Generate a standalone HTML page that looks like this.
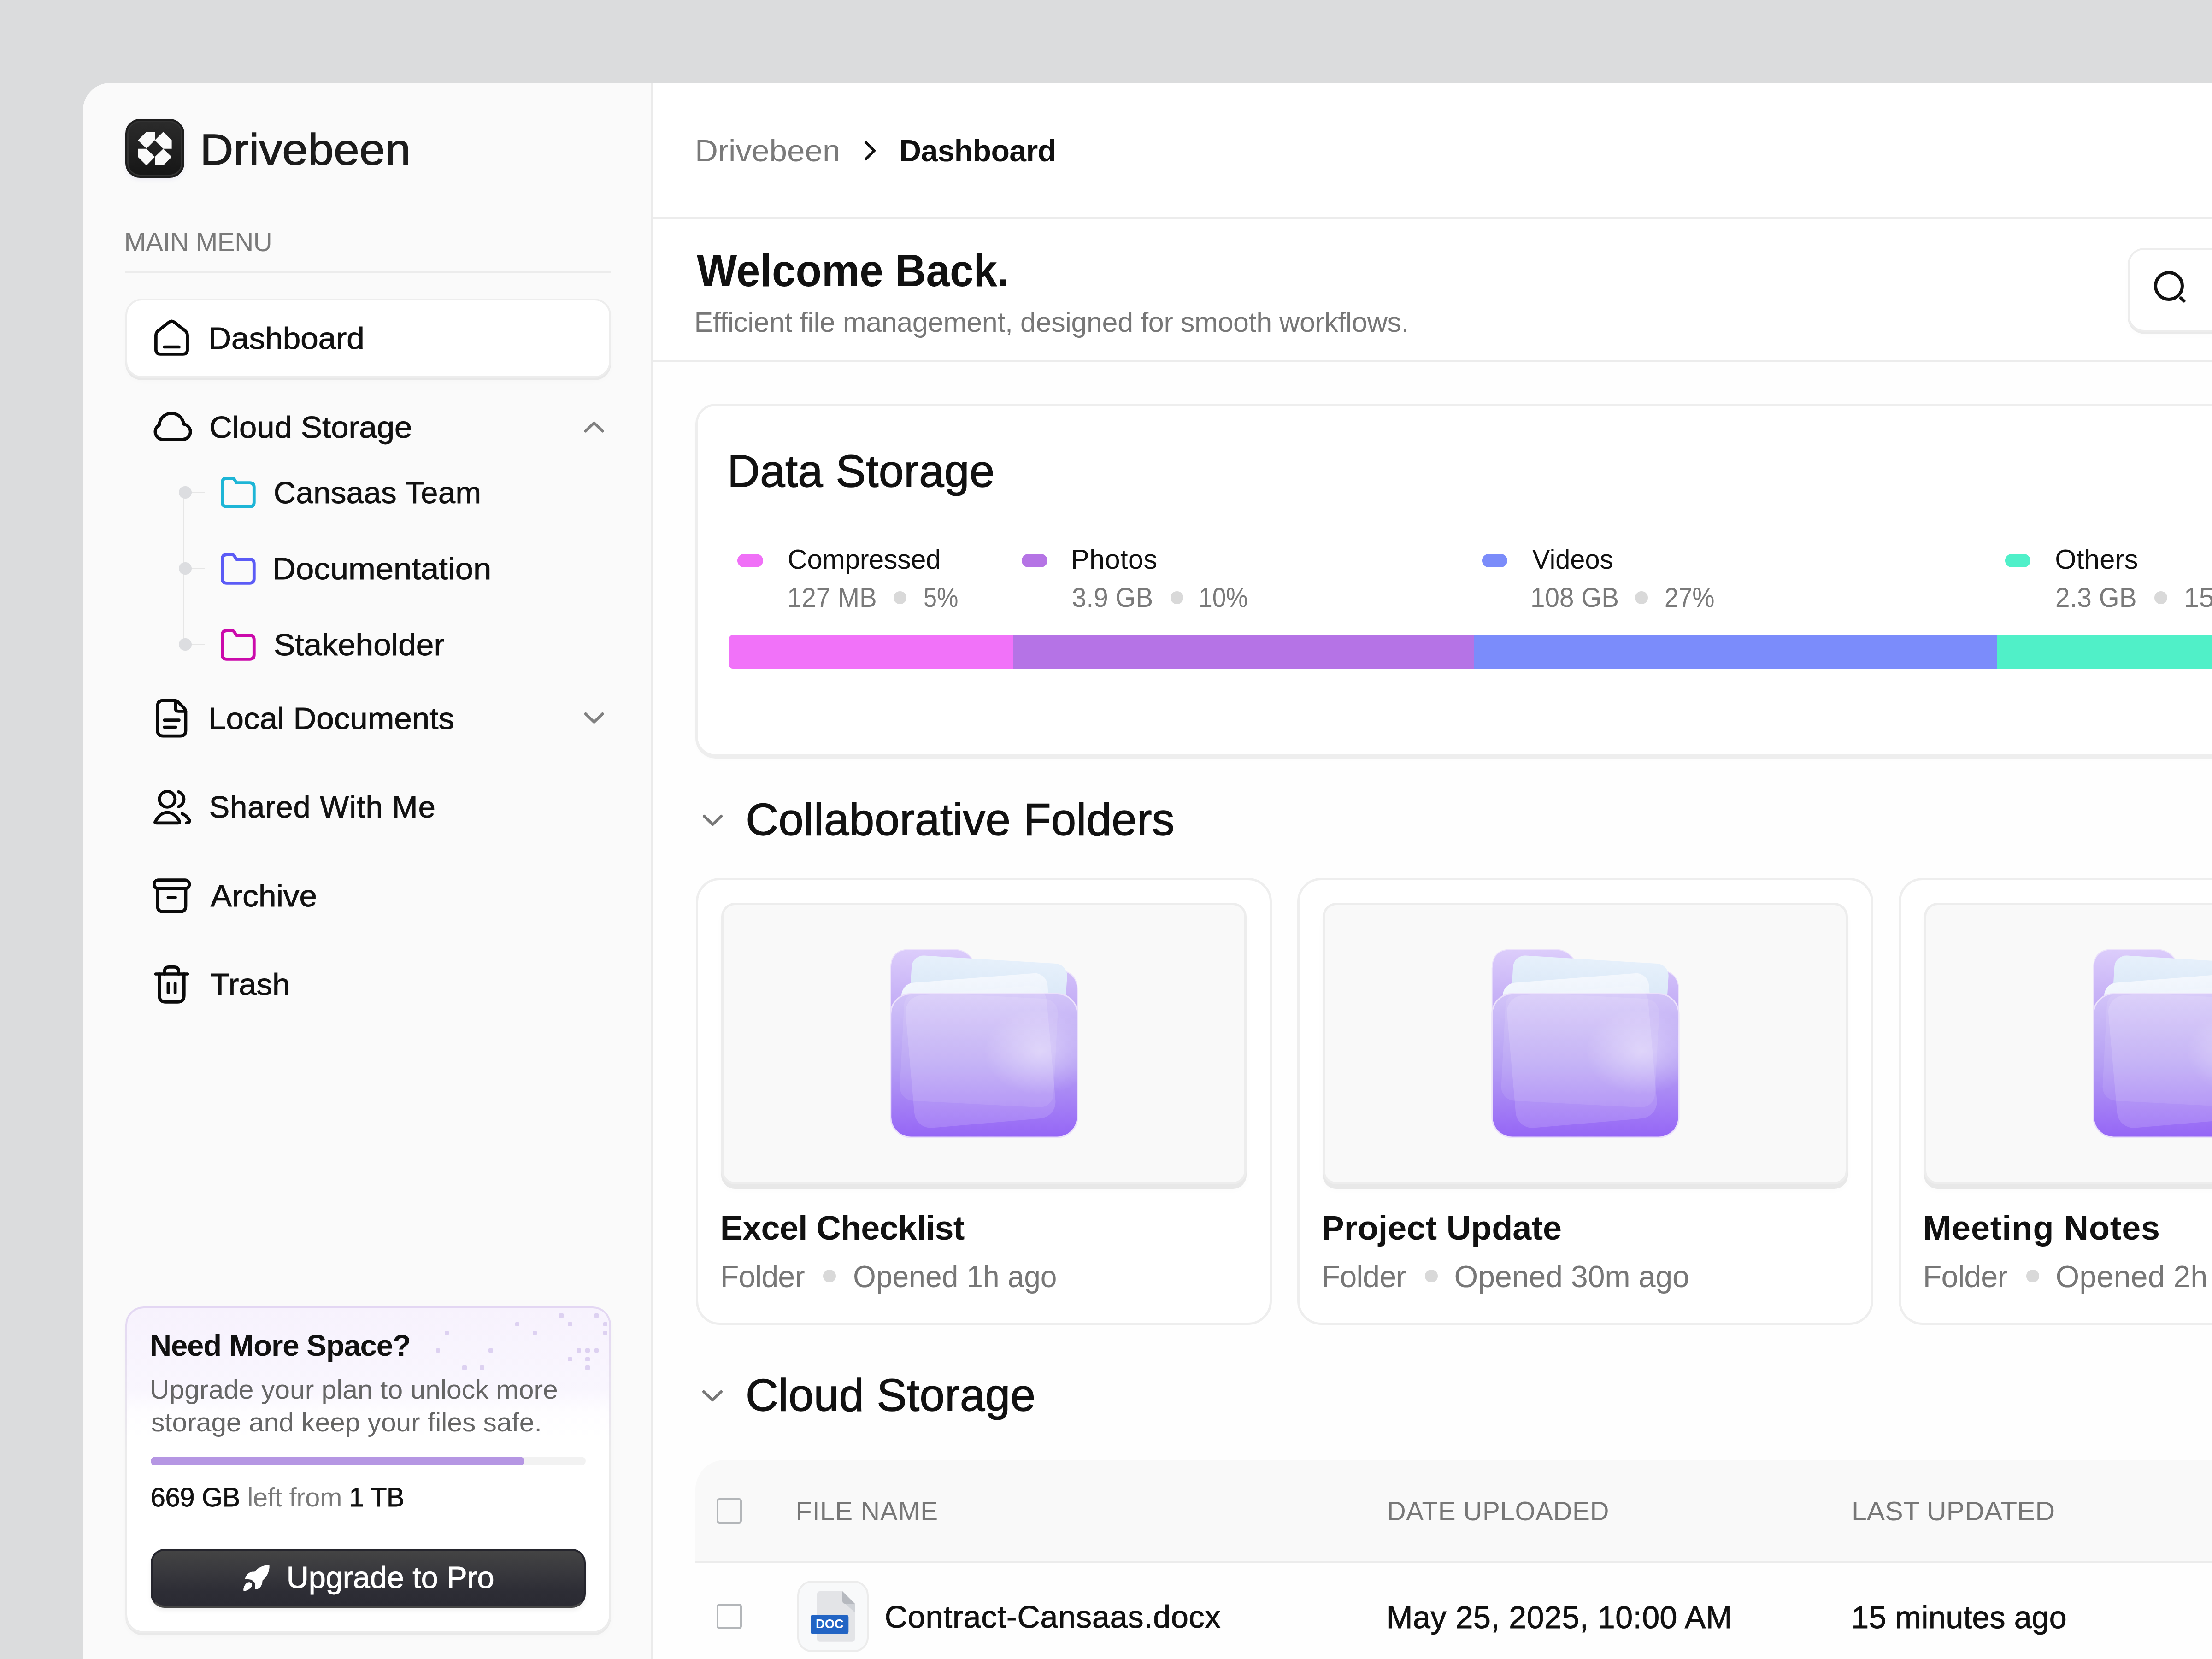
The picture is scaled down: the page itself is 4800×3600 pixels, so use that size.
<!DOCTYPE html>
<html><head><meta charset="utf-8"><title>Drivebeen Dashboard</title>
<style>
html,body{margin:0;padding:0;width:4800px;height:3600px;overflow:hidden;background:#dbdcdd}
body{position:relative;font-family:"Liberation Sans",sans-serif}
.t{position:absolute;white-space:nowrap;line-height:1}
svg{overflow:visible}
</style></head><body>
<div style="position:absolute;left:180px;top:180px;width:4620px;height:3420px;background:#ffffff;border-top-left-radius:60px"></div>
<div style="position:absolute;left:180px;top:180px;width:1233px;height:3420px;background:#fafafa;border-top-left-radius:60px;border-right:4px solid #ebebeb"></div>
<div style="position:absolute;left:1417px;top:786px;width:3383px;height:2814px;background:#fefefe"></div>
<div style="position:absolute;left:1417px;top:471px;width:3383px;height:4px;background:#ececec"></div>
<div style="position:absolute;left:1417px;top:782px;width:3383px;height:4px;background:#ececec"></div>
<div style="position:absolute;left:272px;top:258px;width:128px;height:128px;box-sizing:border-box;border-radius:32px;background:linear-gradient(#2b2b2b,#161616);border:4px solid #1d1d1d;box-shadow:inset 0 0 0 3px #323232,0 4px 10px rgba(120,110,200,0.10)"></div>
<svg style="position:absolute;left:272px;top:258px;" width="128" height="128" viewBox="0 0 128 128"><g fill="#fafafa"><polygon points="27.3,46.2 45.9,28 64,28 64,46.2 45.9,64.3"/><polygon points="64,46.2 82.3,28 100.6,46.2 100.6,64.8 82.3,64.8"/><polygon points="27.3,64.8 45.9,64.8 64,82.4 45.9,101 27.3,82.4"/><polygon points="64,82.4 82.3,64.8 100.6,82.4 82.3,101 64,101"/></g></svg>
<div class="t" style="left:434.0px;top:276.9px;font-size:94.61px;letter-spacing:0.00px;font-weight:normal;color:#1c1c1c;-webkit-text-stroke:1.32px #1c1c1c;transform:scaleX(1.0606);transform-origin:0 0;">Drivebeen</div>
<div class="t" style="left:269.5px;top:497.7px;font-size:56.74px;letter-spacing:-0.43px;font-weight:normal;color:#7a7a7a;">MAIN MENU</div>
<div style="position:absolute;left:272px;top:588px;width:1054px;height:4px;background:#ececec"></div>
<div style="position:absolute;left:272px;top:648px;width:1054px;height:172px;box-sizing:border-box;background:#fff;border:4px solid #ededed;border-radius:36px;box-shadow:0 5px 0 #e8e8e8,0 8px 14px rgba(0,0,0,0.015)"></div>
<svg style="position:absolute;left:310px;top:670px;" width="130" height="130" viewBox="0 0 130 130"><g fill="none" stroke="#0a0a0a" stroke-width="6.7" stroke-linecap="round" stroke-linejoin="round"><path d="M28.4 58 Q28.4 51.5 33.5 47.5 L57 29 Q62.5 25 68 29 L91.5 47.5 Q96.6 51.5 96.6 58 V89 Q96.6 98.4 87.2 98.4 H37.8 Q28.4 98.4 28.4 89 Z"/><path d="M47 83 H78.4"/></g></svg>
<div class="t" style="left:451.5px;top:700.7px;font-size:66.67px;letter-spacing:0.00px;font-weight:normal;color:#111111;-webkit-text-stroke:0.93px #111111;transform:scaleX(1.0389);transform-origin:0 0;">Dashboard</div>
<svg style="position:absolute;left:310px;top:860px;" width="130" height="130" viewBox="0 0 130 130"><g fill="none" stroke="#0a0a0a" stroke-width="6.7" stroke-linecap="round" stroke-linejoin="round"><path d="M40.8 93.3 H84.5 A16.4 16.4 0 0 0 88.7 60.5 A26.7 26.7 0 0 0 35.5 62.5 A16.5 16.5 0 0 0 40.8 93.3 Z"/></g></svg>
<div class="t" style="left:453.6px;top:893.7px;font-size:66.67px;letter-spacing:0.00px;font-weight:normal;color:#111111;-webkit-text-stroke:0.93px #111111;transform:scaleX(1.0333);transform-origin:0 0;">Cloud Storage</div>
<svg style="position:absolute;left:1240px;top:880px;" width="100" height="100" viewBox="0 0 100 100"><polyline points="30.7,55.5 49.1,37.7 67.5,55.5" fill="none" stroke="#808080" stroke-width="6" stroke-linecap="round" stroke-linejoin="round"/></svg>
<div style="position:absolute;left:397px;top:1068px;width:3px;height:330px;background:#e6e6e6"></div>
<div style="position:absolute;left:415px;top:1066.9px;width:29px;height:3px;background:#e6e6e6"></div>
<div style="position:absolute;left:388.4px;top:1054.8000000000002px;width:27.2px;height:27.2px;border-radius:50%;background:#dcdde0"></div>
<div style="position:absolute;left:415px;top:1232.0px;width:29px;height:3px;background:#e6e6e6"></div>
<div style="position:absolute;left:388.4px;top:1219.9px;width:27.2px;height:27.2px;border-radius:50%;background:#dcdde0"></div>
<div style="position:absolute;left:415px;top:1396.9px;width:29px;height:3px;background:#e6e6e6"></div>
<div style="position:absolute;left:388.4px;top:1384.8000000000002px;width:27.2px;height:27.2px;border-radius:50%;background:#dcdde0"></div>
<svg style="position:absolute;left:370px;top:1020px;" width="200" height="100" viewBox="0 0 200 100"><path d="M112.6 27 Q112.6 17.5 122 17.5 H133.5 Q136.5 17.5 138.3 20 L142.9 27.6 H171.8 Q181.3 27.6 181.3 37 V70 Q181.3 79.4 171.8 79.4 H122 Q112.6 79.4 112.6 70 Z" fill="none" stroke="#1db5d6" stroke-width="6.8" stroke-linejoin="round"/></svg>
<svg style="position:absolute;left:370px;top:1185.5px;" width="200" height="100" viewBox="0 0 200 100"><path d="M112.6 27 Q112.6 17.5 122 17.5 H133.5 Q136.5 17.5 138.3 20 L142.9 27.6 H171.8 Q181.3 27.6 181.3 37 V70 Q181.3 79.4 171.8 79.4 H122 Q112.6 79.4 112.6 70 Z" fill="none" stroke="#5b5bf6" stroke-width="6.8" stroke-linejoin="round"/></svg>
<svg style="position:absolute;left:370px;top:1350.5px;" width="200" height="100" viewBox="0 0 200 100"><path d="M112.6 27 Q112.6 17.5 122 17.5 H133.5 Q136.5 17.5 138.3 20 L142.9 27.6 H171.8 Q181.3 27.6 181.3 37 V70 Q181.3 79.4 171.8 79.4 H122 Q112.6 79.4 112.6 70 Z" fill="none" stroke="#cb0aab" stroke-width="6.8" stroke-linejoin="round"/></svg>
<div class="t" style="left:593.7px;top:1035.7px;font-size:66.67px;letter-spacing:0.64px;font-weight:normal;color:#111111;-webkit-text-stroke:0.93px #111111;">Cansaas Team</div>
<div class="t" style="left:591.3px;top:1201.2px;font-size:66.67px;letter-spacing:0.00px;font-weight:normal;color:#111111;-webkit-text-stroke:0.93px #111111;transform:scaleX(1.0600);transform-origin:0 0;">Documentation</div>
<div class="t" style="left:593.5px;top:1365.7px;font-size:66.67px;letter-spacing:0.00px;font-weight:normal;color:#111111;-webkit-text-stroke:0.93px #111111;transform:scaleX(1.0417);transform-origin:0 0;">Stakeholder</div>
<svg style="position:absolute;left:310px;top:1500px;" width="130" height="130" viewBox="0 0 130 130"><g fill="none" stroke="#0a0a0a" stroke-width="6.7" stroke-linecap="round" stroke-linejoin="round"><path d="M70.8 20.2 H44 Q31.9 20.2 31.9 32.3 V85 Q31.9 97.1 44 97.1 H81 Q93 97.1 93 85 V45 Q93 40 89.5 36.5 L77 24 Q73.5 20.2 68 20.2"/><path d="M70.8 20.2 V37 Q70.8 43.5 77.3 43.5 H93"/><path d="M47 62.7 H78.4"/><path d="M47 78 H71"/></g></svg>
<div class="t" style="left:451.5px;top:1525.7px;font-size:66.67px;letter-spacing:0.00px;font-weight:normal;color:#111111;-webkit-text-stroke:0.93px #111111;transform:scaleX(1.0368);transform-origin:0 0;">Local Documents</div>
<svg style="position:absolute;left:1240px;top:1510px;" width="100" height="100" viewBox="0 0 100 100"><polyline points="30.7,39 49.1,56.8 67.5,39" fill="none" stroke="#808080" stroke-width="6" stroke-linecap="round" stroke-linejoin="round"/></svg>
<svg style="position:absolute;left:310px;top:1690px;" width="130" height="130" viewBox="0 0 130 130"><g fill="none" stroke="#0a0a0a" stroke-width="6.7" stroke-linecap="round" stroke-linejoin="round"><circle cx="52.9" cy="44.3" r="17"/><path d="M27.5 92 Q24.5 95.8 30 95.8 H76 Q81.5 95.8 79 91 Q68 73 52.9 73 Q38 73 27.5 92 Z"/><path d="M77.6 28.2 A17 17 0 0 1 77.6 60.3"/><path d="M85.4 75.6 Q96 81 101 90 Q102 95.6 95.2 95.6"/></g></svg>
<div class="t" style="left:453.7px;top:1718.4px;font-size:66.67px;letter-spacing:1.01px;font-weight:normal;color:#111111;-webkit-text-stroke:0.93px #111111;">Shared With Me</div>
<svg style="position:absolute;left:310px;top:1880px;" width="130" height="130" viewBox="0 0 130 130"><g fill="none" stroke="#0a0a0a" stroke-width="6.7" stroke-linecap="round" stroke-linejoin="round"><rect x="24.3" y="29.6" width="76.6" height="18.8" rx="9.4"/><path d="M31.9 48.4 V86 Q31.9 98.4 44.3 98.4 H80.6 Q93 98.4 93 86 V48.4"/><path d="M54.9 67.6 H70.5"/></g></svg>
<div class="t" style="left:457.0px;top:1910.7px;font-size:66.67px;letter-spacing:0.00px;font-weight:normal;color:#111111;-webkit-text-stroke:0.93px #111111;transform:scaleX(1.0395);transform-origin:0 0;">Archive</div>
<svg style="position:absolute;left:310px;top:2070px;" width="130" height="130" viewBox="0 0 130 130"><g fill="none" stroke="#0a0a0a" stroke-width="6.7" stroke-linecap="round" stroke-linejoin="round"><path d="M28.2 43.5 H96.8"/><path d="M47 43.5 V38 Q47 28.4 56.6 28.4 H68 Q77.6 28.4 77.6 38 V43.5"/><path d="M35.7 43.5 V90 Q35.7 104.4 50 104.4 H75 Q89.3 104.4 89.3 90 V43.5"/><path d="M54.9 63.9 V83.9"/><path d="M70.1 63.9 V83.9"/></g></svg>
<div class="t" style="left:455.6px;top:2102.7px;font-size:66.67px;letter-spacing:0.00px;font-weight:normal;color:#111111;-webkit-text-stroke:0.93px #111111;transform:scaleX(1.0309);transform-origin:0 0;">Trash</div>
<div style="position:absolute;left:272px;top:2835px;width:1054px;height:709px;box-sizing:border-box;border-radius:40px;background:linear-gradient(#e3d7f3,#ececec 45%,#ececec);box-shadow:0 5px 0 #e9e9e9,0 8px 14px rgba(0,0,0,0.02)"></div>
<div style="position:absolute;left:276px;top:2839px;width:1046px;height:701px;border-radius:36px;background:linear-gradient(#f7f2fd,#f9f6fe 25%,#fefdff 32%,#fff 40%)"></div>
<div style="position:absolute;left:1213.1px;top:2850.0px;width:9.6px;height:9.6px;background:#ddd1f1;border-radius:2px"></div>
<div style="position:absolute;left:1289.5px;top:2850.0px;width:9.6px;height:9.6px;background:#ddd1f1;border-radius:2px"></div>
<div style="position:absolute;left:1117.6px;top:2868.5px;width:9.6px;height:9.6px;background:#ddd1f1;border-radius:2px"></div>
<div style="position:absolute;left:1232.2px;top:2868.5px;width:9.6px;height:9.6px;background:#ddd1f1;border-radius:2px"></div>
<div style="position:absolute;left:1308.6px;top:2868.5px;width:9.6px;height:9.6px;background:#ddd1f1;border-radius:2px"></div>
<div style="position:absolute;left:964.8px;top:2887.8px;width:9.6px;height:9.6px;background:#ddd1f1;border-radius:2px"></div>
<div style="position:absolute;left:1155.8px;top:2887.8px;width:9.6px;height:9.6px;background:#ddd1f1;border-radius:2px"></div>
<div style="position:absolute;left:1308.6px;top:2887.8px;width:9.6px;height:9.6px;background:#ddd1f1;border-radius:2px"></div>
<div style="position:absolute;left:945.5px;top:2925.6px;width:9.6px;height:9.6px;background:#ddd1f1;border-radius:2px"></div>
<div style="position:absolute;left:1060.3px;top:2925.6px;width:9.6px;height:9.6px;background:#ddd1f1;border-radius:2px"></div>
<div style="position:absolute;left:1251.2px;top:2925.6px;width:9.6px;height:9.6px;background:#ddd1f1;border-radius:2px"></div>
<div style="position:absolute;left:1270.4px;top:2925.6px;width:9.6px;height:9.6px;background:#ddd1f1;border-radius:2px"></div>
<div style="position:absolute;left:1289.5px;top:2925.6px;width:9.6px;height:9.6px;background:#ddd1f1;border-radius:2px"></div>
<div style="position:absolute;left:1232.2px;top:2944.9px;width:9.6px;height:9.6px;background:#ddd1f1;border-radius:2px"></div>
<div style="position:absolute;left:1270.4px;top:2944.9px;width:9.6px;height:9.6px;background:#ddd1f1;border-radius:2px"></div>
<div style="position:absolute;left:1003.0px;top:2963.4px;width:9.6px;height:9.6px;background:#ddd1f1;border-radius:2px"></div>
<div style="position:absolute;left:1041.2px;top:2963.4px;width:9.6px;height:9.6px;background:#ddd1f1;border-radius:2px"></div>
<div style="position:absolute;left:1270.4px;top:2963.4px;width:9.6px;height:9.6px;background:#ddd1f1;border-radius:2px"></div>
<div class="t" style="left:324.9px;top:2886.6px;font-size:65.25px;letter-spacing:-1.13px;font-weight:bold;color:#111111;">Need More Space?</div>
<div class="t" style="left:324.8px;top:2987.8px;font-size:56.74px;letter-spacing:0.00px;font-weight:normal;color:#666666;transform:scaleX(1.0364);transform-origin:0 0;">Upgrade your plan to unlock more</div>
<div class="t" style="left:327.7px;top:3059.2px;font-size:56.74px;letter-spacing:0.00px;font-weight:normal;color:#666666;transform:scaleX(1.0338);transform-origin:0 0;">storage and keep your files safe.</div>
<div style="position:absolute;left:327px;top:3161px;width:944px;height:19px;background:#f2f2f2;border-radius:10px"></div>
<div style="position:absolute;left:327px;top:3161px;width:811px;height:19px;background:#b596e3;border-radius:10px"></div>
<div class="t" style="left:326.6px;top:3220.0px;font-size:58.16px;letter-spacing:-0.51px;font-weight:normal;color:#111111;-webkit-text-stroke:0.8px #111;">669 GB<span style="color:#7a7a7a;-webkit-text-stroke:0"> left from </span>1 TB</div>
<div style="position:absolute;left:327px;top:3361px;width:944px;height:128px;box-sizing:border-box;border-radius:30px;background:linear-gradient(#444444,#38383d 40%,#2d2d35 75%,#2b2b33);border:4px solid #25252d;border-bottom:5px solid #464646;box-shadow:0 6px 10px rgba(0,0,0,0.06)"></div>
<svg style="position:absolute;left:510px;top:3380px;" width="100" height="90" viewBox="0 0 100 90"><g fill="#fff"><path d="M74.6 16.5 C60 15.5 50 22 41.8 30.9 C33 29 24 36 21.7 46.1 L35.8 48 L42.9 54.3 L43.4 68.6 C53 69 59 62 59.7 49.4 C69 42 75.5 30 74.6 16.5 Z"/><path d="M19 73 C25 72 35 68 37 60 C37.5 55 32 52 27 54 C21 57 17 67 18.5 72 Z"/></g></svg>
<div class="t" style="left:621.7px;top:3389.7px;font-size:66.67px;letter-spacing:-0.08px;font-weight:normal;color:#ffffff;-webkit-text-stroke:0.93px #ffffff;">Upgrade to Pro</div>
<div class="t" style="left:1507.9px;top:294.1px;font-size:66.24px;letter-spacing:0.00px;font-weight:normal;color:#7a7a7a;transform:scaleX(1.0454);transform-origin:0 0;">Drivebeen</div>
<svg style="position:absolute;left:1860px;top:290px;" width="60" height="80" viewBox="0 0 60 80"><polyline points="19,19 37,37 19,55" fill="none" stroke="#111" stroke-width="6" stroke-linecap="round" stroke-linejoin="round"/></svg>
<div class="t" style="left:1951.3px;top:294.1px;font-size:66.24px;letter-spacing:-0.66px;font-weight:bold;color:#111111;">Dashboard</div>
<div class="t" style="left:1511.5px;top:539.3px;font-size:97.87px;letter-spacing:0.00px;font-weight:bold;color:#111111;transform:scaleX(0.9463);transform-origin:0 0;">Welcome Back.</div>
<div class="t" style="left:1506.6px;top:668.5px;font-size:60.99px;letter-spacing:-0.37px;font-weight:normal;color:#777777;">Efficient file management, designed for smooth workflows.</div>
<div style="position:absolute;left:4617px;top:538px;width:240px;height:182px;box-sizing:border-box;background:#fff;border:4px solid #ededed;border-radius:36px;box-shadow:0 4.5px 0 #eaeaea,0 8px 14px rgba(0,0,0,0.015)"></div>
<svg style="position:absolute;left:4640px;top:560px;" width="140" height="120" viewBox="0 0 140 120"><g fill="none" stroke="#111" stroke-width="7" stroke-linecap="round"><circle cx="66.5" cy="60.5" r="29"/><path d="M92.5 87 L99 93"/></g></svg>
<div style="position:absolute;left:1509px;top:876px;width:3400px;height:766px;box-sizing:border-box;background:#fff;border:5px solid #eeeeee;border-radius:44px;box-shadow:0 4px 0 #eeeeee,0 6px 10px rgba(0,0,0,0.015)"></div>
<div class="t" style="left:1578.2px;top:973.8px;font-size:97.87px;letter-spacing:0.30px;font-weight:normal;color:#111111;-webkit-text-stroke:1.37px #111111;">Data Storage</div>
<div style="position:absolute;left:1600.4px;top:1201.5px;width:55.5px;height:29px;background:#f070f7;border-radius:15px"></div>
<div style="position:absolute;left:2217px;top:1201.5px;width:55.5px;height:29px;background:#b574e5;border-radius:15px"></div>
<div style="position:absolute;left:3215.6px;top:1201.5px;width:55.5px;height:29px;background:#7b8cfa;border-radius:15px"></div>
<div style="position:absolute;left:4350.8px;top:1201.5px;width:55.5px;height:29px;background:#4ff0c9;border-radius:15px"></div>
<div style="position:absolute;left:1938.8px;top:1283.3px;width:28px;height:28px;background:#d9d9d9;border-radius:50%"></div>
<div style="position:absolute;left:2540px;top:1283.3px;width:28px;height:28px;background:#d9d9d9;border-radius:50%"></div>
<div style="position:absolute;left:3547.5px;top:1283.3px;width:28px;height:28px;background:#d9d9d9;border-radius:50%"></div>
<div style="position:absolute;left:4674.5px;top:1283.3px;width:28px;height:28px;background:#d9d9d9;border-radius:50%"></div>
<div class="t" style="left:1709.0px;top:1183.5px;font-size:59.57px;letter-spacing:-0.52px;font-weight:normal;color:#111111;">Compressed</div>
<div class="t" style="left:1707.5px;top:1266.5px;font-size:59.57px;letter-spacing:0.00px;font-weight:normal;color:#7a7a7a;transform:scaleX(0.9483);transform-origin:0 0;">127 MB</div>
<div class="t" style="left:2004.4px;top:1266.5px;font-size:59.57px;letter-spacing:0.00px;font-weight:normal;color:#7a7a7a;transform:scaleX(0.8760);transform-origin:0 0;">5%</div>
<div class="t" style="left:2323.9px;top:1183.5px;font-size:59.57px;letter-spacing:0.40px;font-weight:normal;color:#111111;">Photos</div>
<div class="t" style="left:2326.4px;top:1266.5px;font-size:59.57px;letter-spacing:0.00px;font-weight:normal;color:#7a7a7a;transform:scaleX(0.9499);transform-origin:0 0;">3.9 GB</div>
<div class="t" style="left:2601.1px;top:1266.5px;font-size:59.57px;letter-spacing:0.00px;font-weight:normal;color:#7a7a7a;transform:scaleX(0.8961);transform-origin:0 0;">10%</div>
<div class="t" style="left:3324.9px;top:1183.5px;font-size:59.57px;letter-spacing:0.00px;font-weight:normal;color:#111111;transform:scaleX(0.9684);transform-origin:0 0;">Videos</div>
<div class="t" style="left:3321.0px;top:1266.5px;font-size:59.57px;letter-spacing:0.00px;font-weight:normal;color:#7a7a7a;transform:scaleX(0.9500);transform-origin:0 0;">108 GB</div>
<div class="t" style="left:3611.7px;top:1266.5px;font-size:59.57px;letter-spacing:0.00px;font-weight:normal;color:#7a7a7a;transform:scaleX(0.9101);transform-origin:0 0;">27%</div>
<div class="t" style="left:4459.3px;top:1183.5px;font-size:59.57px;letter-spacing:0.31px;font-weight:normal;color:#111111;">Others</div>
<div class="t" style="left:4459.5px;top:1266.5px;font-size:59.57px;letter-spacing:0.00px;font-weight:normal;color:#7a7a7a;transform:scaleX(0.9519);transform-origin:0 0;">2.3 GB</div>
<div class="t" style="left:4738.7px;top:1266.5px;font-size:59.57px;letter-spacing:0.00px;font-weight:normal;color:#7a7a7a;">15%</div>
<div style="position:absolute;left:1582px;top:1377.5px;width:617px;height:73px;background:#f172f9;border-radius:8px 0 0 8px"></div>
<div style="position:absolute;left:2198.5px;top:1377.5px;width:999px;height:73px;background:#b573e6"></div>
<div style="position:absolute;left:3197.5px;top:1377.5px;width:1136px;height:73px;background:#7b8cfb"></div>
<div style="position:absolute;left:4333px;top:1377.5px;width:600px;height:73px;background:#50f0c8"></div>
<svg style="position:absolute;left:1510px;top:1750px;" width="80" height="60" viewBox="0 0 80 60"><polyline points="18,21 36.5,39 55,21" fill="none" stroke="#777" stroke-width="6" stroke-linecap="round" stroke-linejoin="round"/></svg>
<div class="t" style="left:1618.3px;top:1730.1px;font-size:97.87px;letter-spacing:0.29px;font-weight:normal;color:#111111;-webkit-text-stroke:1.37px #111111;">Collaborative Folders</div>
<div style="position:absolute;left:1509.5px;top:1904.5px;width:1250px;height:970px;box-sizing:border-box;background:#fff;border:5.5px solid #eeeeee;border-radius:52px"></div>
<div style="position:absolute;left:1564.5px;top:1959px;width:1140px;height:611px;box-sizing:border-box;background:#f9f9f9;border:5px solid #ededed;border-radius:30px;box-shadow:0 10px 0 #e8e8e8,0 12px 16px rgba(0,0,0,0.02)"></div>
<svg style="position:absolute;left:1910.5px;top:2038px;" width="450" height="450" viewBox="0 0 450 450"><defs>
<linearGradient id="fb0" x1="0" y1="0" x2="0" y2="1"><stop offset="0" stop-color="#dccdfb"/><stop offset="1" stop-color="#b398f2"/></linearGradient>
<linearGradient id="ff0" x1="0" y1="0" x2="0" y2="1"><stop offset="0" stop-color="#d2c4f8"/><stop offset="0.5" stop-color="#b59ef4"/><stop offset="1" stop-color="#9565f6"/></linearGradient>
<linearGradient id="pp0" x1="0" y1="0" x2="0" y2="1"><stop offset="0" stop-color="#e6f0fb"/><stop offset="1" stop-color="#c5daf0"/></linearGradient>
<linearGradient id="pq0" x1="0" y1="0" x2="0" y2="1"><stop offset="0" stop-color="#f3f7fd"/><stop offset="1" stop-color="#d3e3f5"/></linearGradient>
<radialGradient id="hl0" cx="0.8" cy="0.4" r="0.3"><stop offset="0" stop-color="#ffffff" stop-opacity="0.40"/><stop offset="1" stop-color="#ffffff" stop-opacity="0"/></radialGradient>
</defs>
<path d="M21.7 64 Q21.7 22.3 62 22.3 H158 Q185 22.3 200 45 Q212 67 232 67 H380 Q427 67 427 112 V220 H21.7 Z" fill="url(#fb0)" stroke="#ece3fb" stroke-width="2"/>
<g transform="rotate(3.5 230 150)"><rect x="62" y="44" width="338" height="220" rx="26" fill="url(#pp0)"/></g>
<g transform="rotate(-4.5 208 180)"><rect x="50" y="84" width="318" height="220" rx="28" fill="url(#pq0)"/></g>
<rect x="21.7" y="118.6" width="405.3" height="311.4" rx="44" fill="url(#ff0)" stroke="#ebe1fb" stroke-width="3"/>
<g transform="rotate(3 213 240)"><rect x="46" y="122" width="334" height="236" rx="30" fill="#ffffff" fill-opacity="0.09"/></g>
<g transform="rotate(-5 216.75 255.5)"><rect x="63" y="111" width="307.5" height="288.8" rx="36" fill="#ffffff" fill-opacity="0.14"/></g>
<rect x="21.7" y="118.6" width="405.3" height="311.4" rx="44" fill="url(#hl0)"/>
</svg>
<div style="position:absolute;left:1786.3px;top:2754.5px;width:28px;height:28px;background:#d9d9d9;border-radius:50%"></div>
<div style="position:absolute;left:2814.8px;top:1904.5px;width:1250px;height:970px;box-sizing:border-box;background:#fff;border:5.5px solid #eeeeee;border-radius:52px"></div>
<div style="position:absolute;left:2869.8px;top:1959px;width:1140px;height:611px;box-sizing:border-box;background:#f9f9f9;border:5px solid #ededed;border-radius:30px;box-shadow:0 10px 0 #e8e8e8,0 12px 16px rgba(0,0,0,0.02)"></div>
<svg style="position:absolute;left:3215.8px;top:2038px;" width="450" height="450" viewBox="0 0 450 450"><defs>
<linearGradient id="fb1" x1="0" y1="0" x2="0" y2="1"><stop offset="0" stop-color="#dccdfb"/><stop offset="1" stop-color="#b398f2"/></linearGradient>
<linearGradient id="ff1" x1="0" y1="0" x2="0" y2="1"><stop offset="0" stop-color="#d2c4f8"/><stop offset="0.5" stop-color="#b59ef4"/><stop offset="1" stop-color="#9565f6"/></linearGradient>
<linearGradient id="pp1" x1="0" y1="0" x2="0" y2="1"><stop offset="0" stop-color="#e6f0fb"/><stop offset="1" stop-color="#c5daf0"/></linearGradient>
<linearGradient id="pq1" x1="0" y1="0" x2="0" y2="1"><stop offset="0" stop-color="#f3f7fd"/><stop offset="1" stop-color="#d3e3f5"/></linearGradient>
<radialGradient id="hl1" cx="0.8" cy="0.4" r="0.3"><stop offset="0" stop-color="#ffffff" stop-opacity="0.40"/><stop offset="1" stop-color="#ffffff" stop-opacity="0"/></radialGradient>
</defs>
<path d="M21.7 64 Q21.7 22.3 62 22.3 H158 Q185 22.3 200 45 Q212 67 232 67 H380 Q427 67 427 112 V220 H21.7 Z" fill="url(#fb1)" stroke="#ece3fb" stroke-width="2"/>
<g transform="rotate(3.5 230 150)"><rect x="62" y="44" width="338" height="220" rx="26" fill="url(#pp1)"/></g>
<g transform="rotate(-4.5 208 180)"><rect x="50" y="84" width="318" height="220" rx="28" fill="url(#pq1)"/></g>
<rect x="21.7" y="118.6" width="405.3" height="311.4" rx="44" fill="url(#ff1)" stroke="#ebe1fb" stroke-width="3"/>
<g transform="rotate(3 213 240)"><rect x="46" y="122" width="334" height="236" rx="30" fill="#ffffff" fill-opacity="0.09"/></g>
<g transform="rotate(-5 216.75 255.5)"><rect x="63" y="111" width="307.5" height="288.8" rx="36" fill="#ffffff" fill-opacity="0.14"/></g>
<rect x="21.7" y="118.6" width="405.3" height="311.4" rx="44" fill="url(#hl1)"/>
</svg>
<div style="position:absolute;left:3091.6000000000004px;top:2754.5px;width:28px;height:28px;background:#d9d9d9;border-radius:50%"></div>
<div style="position:absolute;left:4120.1px;top:1904.5px;width:1250px;height:970px;box-sizing:border-box;background:#fff;border:5.5px solid #eeeeee;border-radius:52px"></div>
<div style="position:absolute;left:4175.1px;top:1959px;width:1140px;height:611px;box-sizing:border-box;background:#f9f9f9;border:5px solid #ededed;border-radius:30px;box-shadow:0 10px 0 #e8e8e8,0 12px 16px rgba(0,0,0,0.02)"></div>
<svg style="position:absolute;left:4521.1px;top:2038px;" width="450" height="450" viewBox="0 0 450 450"><defs>
<linearGradient id="fb2" x1="0" y1="0" x2="0" y2="1"><stop offset="0" stop-color="#dccdfb"/><stop offset="1" stop-color="#b398f2"/></linearGradient>
<linearGradient id="ff2" x1="0" y1="0" x2="0" y2="1"><stop offset="0" stop-color="#d2c4f8"/><stop offset="0.5" stop-color="#b59ef4"/><stop offset="1" stop-color="#9565f6"/></linearGradient>
<linearGradient id="pp2" x1="0" y1="0" x2="0" y2="1"><stop offset="0" stop-color="#e6f0fb"/><stop offset="1" stop-color="#c5daf0"/></linearGradient>
<linearGradient id="pq2" x1="0" y1="0" x2="0" y2="1"><stop offset="0" stop-color="#f3f7fd"/><stop offset="1" stop-color="#d3e3f5"/></linearGradient>
<radialGradient id="hl2" cx="0.8" cy="0.4" r="0.3"><stop offset="0" stop-color="#ffffff" stop-opacity="0.40"/><stop offset="1" stop-color="#ffffff" stop-opacity="0"/></radialGradient>
</defs>
<path d="M21.7 64 Q21.7 22.3 62 22.3 H158 Q185 22.3 200 45 Q212 67 232 67 H380 Q427 67 427 112 V220 H21.7 Z" fill="url(#fb2)" stroke="#ece3fb" stroke-width="2"/>
<g transform="rotate(3.5 230 150)"><rect x="62" y="44" width="338" height="220" rx="26" fill="url(#pp2)"/></g>
<g transform="rotate(-4.5 208 180)"><rect x="50" y="84" width="318" height="220" rx="28" fill="url(#pq2)"/></g>
<rect x="21.7" y="118.6" width="405.3" height="311.4" rx="44" fill="url(#ff2)" stroke="#ebe1fb" stroke-width="3"/>
<g transform="rotate(3 213 240)"><rect x="46" y="122" width="334" height="236" rx="30" fill="#ffffff" fill-opacity="0.09"/></g>
<g transform="rotate(-5 216.75 255.5)"><rect x="63" y="111" width="307.5" height="288.8" rx="36" fill="#ffffff" fill-opacity="0.14"/></g>
<rect x="21.7" y="118.6" width="405.3" height="311.4" rx="44" fill="url(#hl2)"/>
</svg>
<div style="position:absolute;left:4396.900000000001px;top:2754.5px;width:28px;height:28px;background:#d9d9d9;border-radius:50%"></div>
<div class="t" style="left:1562.8px;top:2628.2px;font-size:73.76px;letter-spacing:-0.75px;font-weight:bold;color:#111111;">Excel Checklist</div>
<div class="t" style="left:1562.7px;top:2736.9px;font-size:66.67px;letter-spacing:-1.01px;font-weight:normal;color:#777777;">Folder</div>
<div class="t" style="left:1850.6px;top:2736.9px;font-size:66.67px;letter-spacing:0.00px;font-weight:normal;color:#777777;transform:scaleX(0.9629);transform-origin:0 0;">Opened 1h ago</div>
<div class="t" style="left:2867.6px;top:2628.2px;font-size:73.76px;letter-spacing:0.08px;font-weight:bold;color:#111111;">Project Update</div>
<div class="t" style="left:2867.5px;top:2736.9px;font-size:66.67px;letter-spacing:-1.01px;font-weight:normal;color:#777777;">Folder</div>
<div class="t" style="left:3155.5px;top:2736.9px;font-size:66.67px;letter-spacing:-0.35px;font-weight:normal;color:#777777;">Opened 30m ago</div>
<div class="t" style="left:4172.8px;top:2628.2px;font-size:73.76px;letter-spacing:0.86px;font-weight:bold;color:#111111;">Meeting Notes</div>
<div class="t" style="left:4172.7px;top:2736.9px;font-size:66.67px;letter-spacing:-1.01px;font-weight:normal;color:#777777;">Folder</div>
<div class="t" style="left:4460.5px;top:2736.9px;font-size:66.67px;letter-spacing:0.00px;font-weight:normal;color:#777777;">Opened 2h ago</div>
<svg style="position:absolute;left:1510px;top:3000px;" width="80" height="60" viewBox="0 0 80 60"><polyline points="17,20 36,38 55,20" fill="none" stroke="#777" stroke-width="6" stroke-linecap="round" stroke-linejoin="round"/></svg>
<div class="t" style="left:1618.1px;top:2979.3px;font-size:97.87px;letter-spacing:0.26px;font-weight:normal;color:#111111;-webkit-text-stroke:1.37px #111111;">Cloud Storage</div>
<div style="position:absolute;left:1509px;top:3168px;width:3400px;height:224px;box-sizing:border-box;background:#f9f9f9;border-bottom:4px solid #ececec;border-top-left-radius:64px"></div>
<div style="position:absolute;left:1555px;top:3251px;width:55px;height:55px;box-sizing:border-box;border:4.5px solid #b3b6b9;border-radius:6px"></div>
<div class="t" style="left:1727.0px;top:3251.8px;font-size:56.74px;letter-spacing:1.09px;font-weight:normal;color:#777777;">FILE NAME</div>
<div class="t" style="left:3009.7px;top:3251.8px;font-size:56.74px;letter-spacing:0.56px;font-weight:normal;color:#777777;">DATE UPLOADED</div>
<div class="t" style="left:4018.0px;top:3251.8px;font-size:56.74px;letter-spacing:0.00px;font-weight:normal;color:#777777;transform:scaleX(1.0414);transform-origin:0 0;">LAST UPDATED</div>
<div style="position:absolute;left:1555px;top:3480px;width:55px;height:55px;box-sizing:border-box;border:4.5px solid #b3b6b9;border-radius:6px"></div>
<div style="position:absolute;left:1730px;top:3430px;width:155px;height:155px;box-sizing:border-box;background:#f8f9fa;border:4px solid #ececec;border-radius:32px"></div>
<svg style="position:absolute;left:1760px;top:3450px;" width="100" height="120" viewBox="0 0 100 120"><path d="M13 9 Q13 3 19 3 H68 L95 30 V106 Q95 112.7 89 112.7 H19 Q13 112.7 13 106 Z" fill="#e3e4e7"/><path d="M68 3 V24 Q68 30 74 30 H95 Z" fill="#b6b9bf"/><path d="M74 30 H95 V49 Z" fill="#cfd2d7"/><rect x="-1" y="54" width="82.3" height="42" rx="5" fill="#2264c4"/></svg>
<div class="t" style="left:1770.0px;top:3509.1px;font-size:28.37px;letter-spacing:0.00px;font-weight:bold;color:#ffffff;transform:scaleX(0.9594);transform-origin:0 0;">DOC</div>
<div class="t" style="left:1919.8px;top:3473.6px;font-size:68.09px;letter-spacing:0.87px;font-weight:normal;color:#111111;-webkit-text-stroke:0.95px #111111;">Contract-Cansaas.docx</div>
<div class="t" style="left:3008.8px;top:3475.2px;font-size:68.09px;letter-spacing:0.55px;font-weight:normal;color:#111111;-webkit-text-stroke:0.95px #111111;">May 25, 2025, 10:00 AM</div>
<div class="t" style="left:4017.3px;top:3475.2px;font-size:68.09px;letter-spacing:0.14px;font-weight:normal;color:#111111;-webkit-text-stroke:0.95px #111111;">15 minutes ago</div>
</body></html>
